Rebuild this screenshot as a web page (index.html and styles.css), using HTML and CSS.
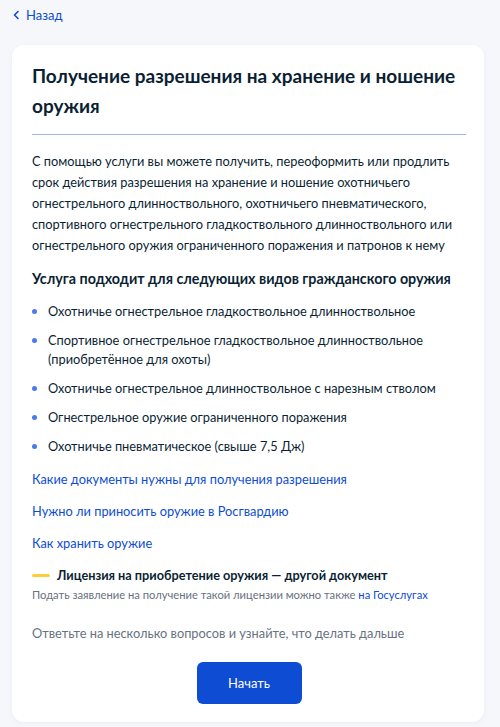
FILE: index.html
```html
<!DOCTYPE html>
<html lang="ru">
<head>
    <meta charset="UTF-8">
    <meta name="viewport" content="width=device-width, initial-scale=1.0">
    <title>Получение разрешения на хранение и ношение оружия</title>
    <link rel="stylesheet" href="styles.css">
</head>
<body>
    <a class="back" href="#">
        <svg width="8" height="10" viewBox="0 0 8 10"><path d="M6 1.5L2.5 5L6 8.5" fill="none" stroke="#0d4cd3" stroke-width="1.6" stroke-linecap="round" stroke-linejoin="round"/></svg>
        Назад
    </a>
    <div class="card">
        <h1>Получение разрешения на хранение и ношение оружия</h1>
        <hr class="divider">
        <p class="intro">С помощью услуги вы можете получить, переоформить или продлить срок действия разрешения на хранение и ношение охотничьего огнестрельного длинноствольного, охотничьего пневматического, спортивного огнестрельного гладкоствольного длинноствольного или огнестрельного оружия ограниченного поражения и патронов к нему</p>

        <h2>Услуга подходит для следующих видов гражданского оружия</h2>
        <ul class="kinds">
            <li>Охотничье огнестрельное гладкоствольное длинноствольное</li>
            <li>Спортивное огнестрельное гладкоствольное длинноствольное (приобретённое для охоты)</li>
            <li>Охотничье огнестрельное длинноствольное с нарезным стволом</li>
            <li>Огнестрельное оружие ограниченного поражения</li>
            <li>Охотничье пневматическое (свыше 7,5 Дж)</li>
        </ul>

        <div class="links">
            <a href="#">Какие документы нужны для получения разрешения</a>
            <a href="#">Нужно ли приносить оружие в Росгвардию</a>
            <a href="#">Как хранить оружие</a>
        </div>

        <div class="note">
            <div class="note-title">Лицензия на приобретение оружия — другой документ</div>
            <div class="note-text">Подать заявление на получение такой лицензии можно также <a href="#">на Госуслугах</a></div>
        </div>

        <p class="hint">Ответьте на несколько вопросов и узнайте, что делать дальше</p>

        <div class="actions">
            <button type="button">Начать</button>
        </div>
    </div>
</body>
</html>
```

FILE: styles.css
```css
body {
    font-family: Lato, "Noto Sans", sans-serif;
    background-color: #f5f7fb;
    color: #0b1f33;
    margin: 0;
    padding: 5px 16px 7px 12px;
}
a {
    color: #0d4cd3;
    text-decoration: none;
}
.back {
    display: flex;
    align-items: center;
    gap: 6px;
    font-size: 13px;
    height: 20px;
    margin-bottom: 20px;
}
.card {
    background: white;
    border-radius: 12px;
    box-shadow: 0 1px 4px rgba(80, 110, 170, 0.08);
    padding: 16px 18px 18px 20px;
}
h1 {
    font-size: 19px;
    line-height: 30px;
    margin: 0;
}
.divider {
    border: none;
    border-top: 1px solid #9fb6e6;
    margin: 13px 0 16px;
}
.intro {
    font-size: 12.8px;
    line-height: 21px;
    margin: 0 0 13px;
}
h2 {
    font-size: 14.3px;
    line-height: 20px;
    margin: 0 0 8px;
}
.kinds {
    list-style: none;
    margin: 0;
    padding: 0;
}
.kinds li {
    position: relative;
    font-size: 12.8px;
    line-height: 19px;
    padding: 5px 0 5px 16px;
}
.kinds li::before {
    content: "";
    position: absolute;
    left: 0;
    top: 12px;
    width: 5px;
    height: 5px;
    border-radius: 50%;
    background: #4a79f0;
}
.links {
    display: flex;
    flex-direction: column;
    gap: 13px;
    margin-top: 9px;
    font-size: 12.8px;
    line-height: 19px;
}
.note {
    margin-top: 12px;
}
.note-title {
    display: flex;
    align-items: center;
    gap: 7px;
    font-size: 12.7px;
    font-weight: bold;
    line-height: 20px;
}
.note-title::before {
    content: "";
    width: 18px;
    height: 3px;
    border-radius: 2px;
    background: #fdce38;
}
.note-text {
    font-size: 11.2px;
    line-height: 16px;
    color: #66727f;
    margin-top: 2px;
}
.hint {
    font-size: 12.8px;
    line-height: 20px;
    color: #66727f;
    margin: 20px 0 0;
}
.actions {
    display: flex;
    justify-content: center;
    margin-top: 19px;
}
button {
    width: 105px;
    height: 42px;
    border: none;
    border-radius: 6px;
    background-color: #0d4cd3;
    color: white;
    font-family: Lato, "Noto Sans", sans-serif;
    font-size: 13px;
    cursor: pointer;
}
```
